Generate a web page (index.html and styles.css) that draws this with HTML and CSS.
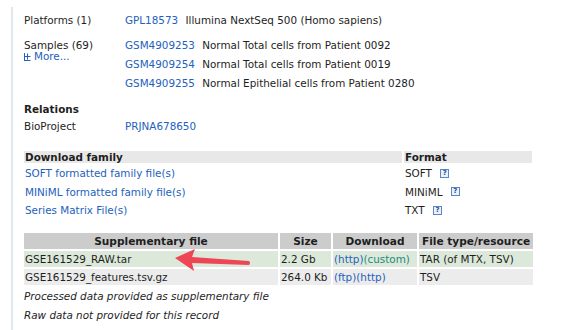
FILE: index.html
```html
<!DOCTYPE html>
<html>

<head>
  <meta charset="UTF-8">
  <link rel="stylesheet" href="styles.css">
</head>

<body>
  <div class="record">
    <div class="meta-row platforms">
      <div class="label">Platforms (1)</div>
      <div class="values">
        <div class="value"><a href="#">GPL18573</a> Illumina NextSeq 500 (Homo sapiens)</div>
      </div>
    </div>
    <div class="meta-row samples">
      <div class="label">
        <div>Samples (69)</div>
        <a href="#" class="more"><svg class="plus" width="7" height="8" viewBox="0 0 7 8"><path d="M0.5 0v8M0.5 3.5h6M3.5 0.5v6M0.5 7.5h6" stroke="#2461bd" stroke-width="1" fill="none"/></svg>More...</a>
      </div>
      <div class="values">
        <div class="value"><a href="#">GSM4909253</a> Normal Total cells from Patient 0092</div>
        <div class="value"><a href="#">GSM4909254</a> Normal Total cells from Patient 0019</div>
        <div class="value"><a href="#">GSM4909255</a> Normal Epithelial cells from Patient 0280</div>
      </div>
    </div>

    <div class="relations">
      <div class="heading">Relations</div>
      <div class="meta-row">
        <div class="label">BioProject</div>
        <div class="values"><a href="#">PRJNA678650</a></div>
      </div>
    </div>

    <table class="family">
      <tr>
        <th class="family-name">Download family</th>
        <th class="family-format">Format</th>
      </tr>
      <tr>
        <td><a href="#">SOFT formatted family file(s)</a></td>
        <td>SOFT <span class="help">?</span></td>
      </tr>
      <tr>
        <td><a href="#">MINiML formatted family file(s)</a></td>
        <td>MINiML <span class="help">?</span></td>
      </tr>
      <tr>
        <td><a href="#">Series Matrix File(s)</a></td>
        <td>TXT <span class="help">?</span></td>
      </tr>
    </table>

    <table class="supp">
      <tr>
        <th class="col-file">Supplementary file</th>
        <th class="col-size">Size</th>
        <th class="col-dl">Download</th>
        <th class="col-type">File type/resource</th>
      </tr>
      <tr class="green">
        <td>GSE161529_RAW.tar</td>
        <td>2.2 Gb</td>
        <td><a href="#">(http)</a><a href="#" class="custom">(custom)</a></td>
        <td>TAR (of MTX, TSV)</td>
      </tr>
      <tr class="grey">
        <td>GSE161529_features.tsv.gz</td>
        <td>264.0 Kb</td>
        <td><a href="#">(ftp)</a><a href="#">(http)</a></td>
        <td>TSV</td>
      </tr>
    </table>

    <div class="notes">
      <div>Processed data provided as supplementary file</div>
      <div>Raw data not provided for this record</div>
    </div>
  </div>

  <svg class="arrow" width="90" height="30" viewBox="0 0 90 30">
    <path d="M4 12 L24 3 L21 11 L78 15 Q80 17 78 19 L21 17 L23 25 Z" fill="#ef4656"/>
  </svg>
</body>

</html>
```

FILE: styles.css
```css
body {
  margin: 0;
  background-color: #ffffff;
  font-family: "DejaVu Sans", Verdana, sans-serif;
  font-size: 10.4px;
  color: #1e1e1e;
}

a {
  color: #2461bd;
  text-decoration: none;
}

.record {
  margin: 7px 0 0 11px;
  padding: 4px 0 8px 11px;
  border-left: 2px solid #e2e8ef;
}

.meta-row {
  display: flex;
}

.label {
  width: 101px;
  flex-shrink: 0;
  line-height: 19px;
}

.value {
  line-height: 19px;
}

.value a {
  margin-right: 4px;
}

.samples {
  margin-top: 6px;
}

.samples .label {
  padding-top: 4px;
  line-height: 11px;
}

.more {
  display: flex;
  align-items: center;
  gap: 3px;
}

.plus {
  margin-top: 1px;
}

.relations {
  margin-top: 8px;
}

.heading {
  font-weight: bold;
  line-height: 17px;
}

.relations .label,
.relations .values {
  line-height: 17px;
}

table {
  border-collapse: separate;
  border-spacing: 2px;
  margin-left: -2px;
  font-size: 10.4px;
}

th {
  text-align: left;
  font-weight: bold;
  padding: 0 1px;
}

td {
  padding: 0 1px;
}

.family {
  margin-top: 14px;
  width: 512px;
}

.family th {
  background-color: #e8e8e8;
  height: 12px;
  line-height: 12px;
}

.family td {
  height: 16.5px;
  line-height: 16.5px;
}

.family-name {
  width: 376px;
}

.help {
  display: inline-block;
  box-sizing: border-box;
  width: 9px;
  height: 9px;
  margin-left: 5px;
  border: 1px solid #5a87c8;
  background-color: #eaf1fb;
  color: #2b4f8c;
  font-size: 7px;
  font-weight: bold;
  line-height: 7px;
  text-align: center;
  vertical-align: middle;
  position: relative;
  top: -1px;
}

.supp {
  margin-top: 10px;
}

.supp th {
  text-align: center;
  background-color: #cccccc;
  height: 16.5px;
  line-height: 16.5px;
  font-size: 10.6px;
}

.supp td {
  height: 16px;
  line-height: 16px;
}

.col-file {
  width: 252px;
}

.col-size {
  width: 49px;
}

.col-dl {
  width: 82px;
}

.col-type {
  width: 112px;
}

.green td {
  background-color: #dce9da;
}

.grey td {
  background-color: #ececec;
}

.custom {
  color: #1d8b7d;
}

.notes {
  font-style: italic;
  line-height: 18.5px;
}

.arrow {
  position: absolute;
  left: 171px;
  top: 246px;
}
```
